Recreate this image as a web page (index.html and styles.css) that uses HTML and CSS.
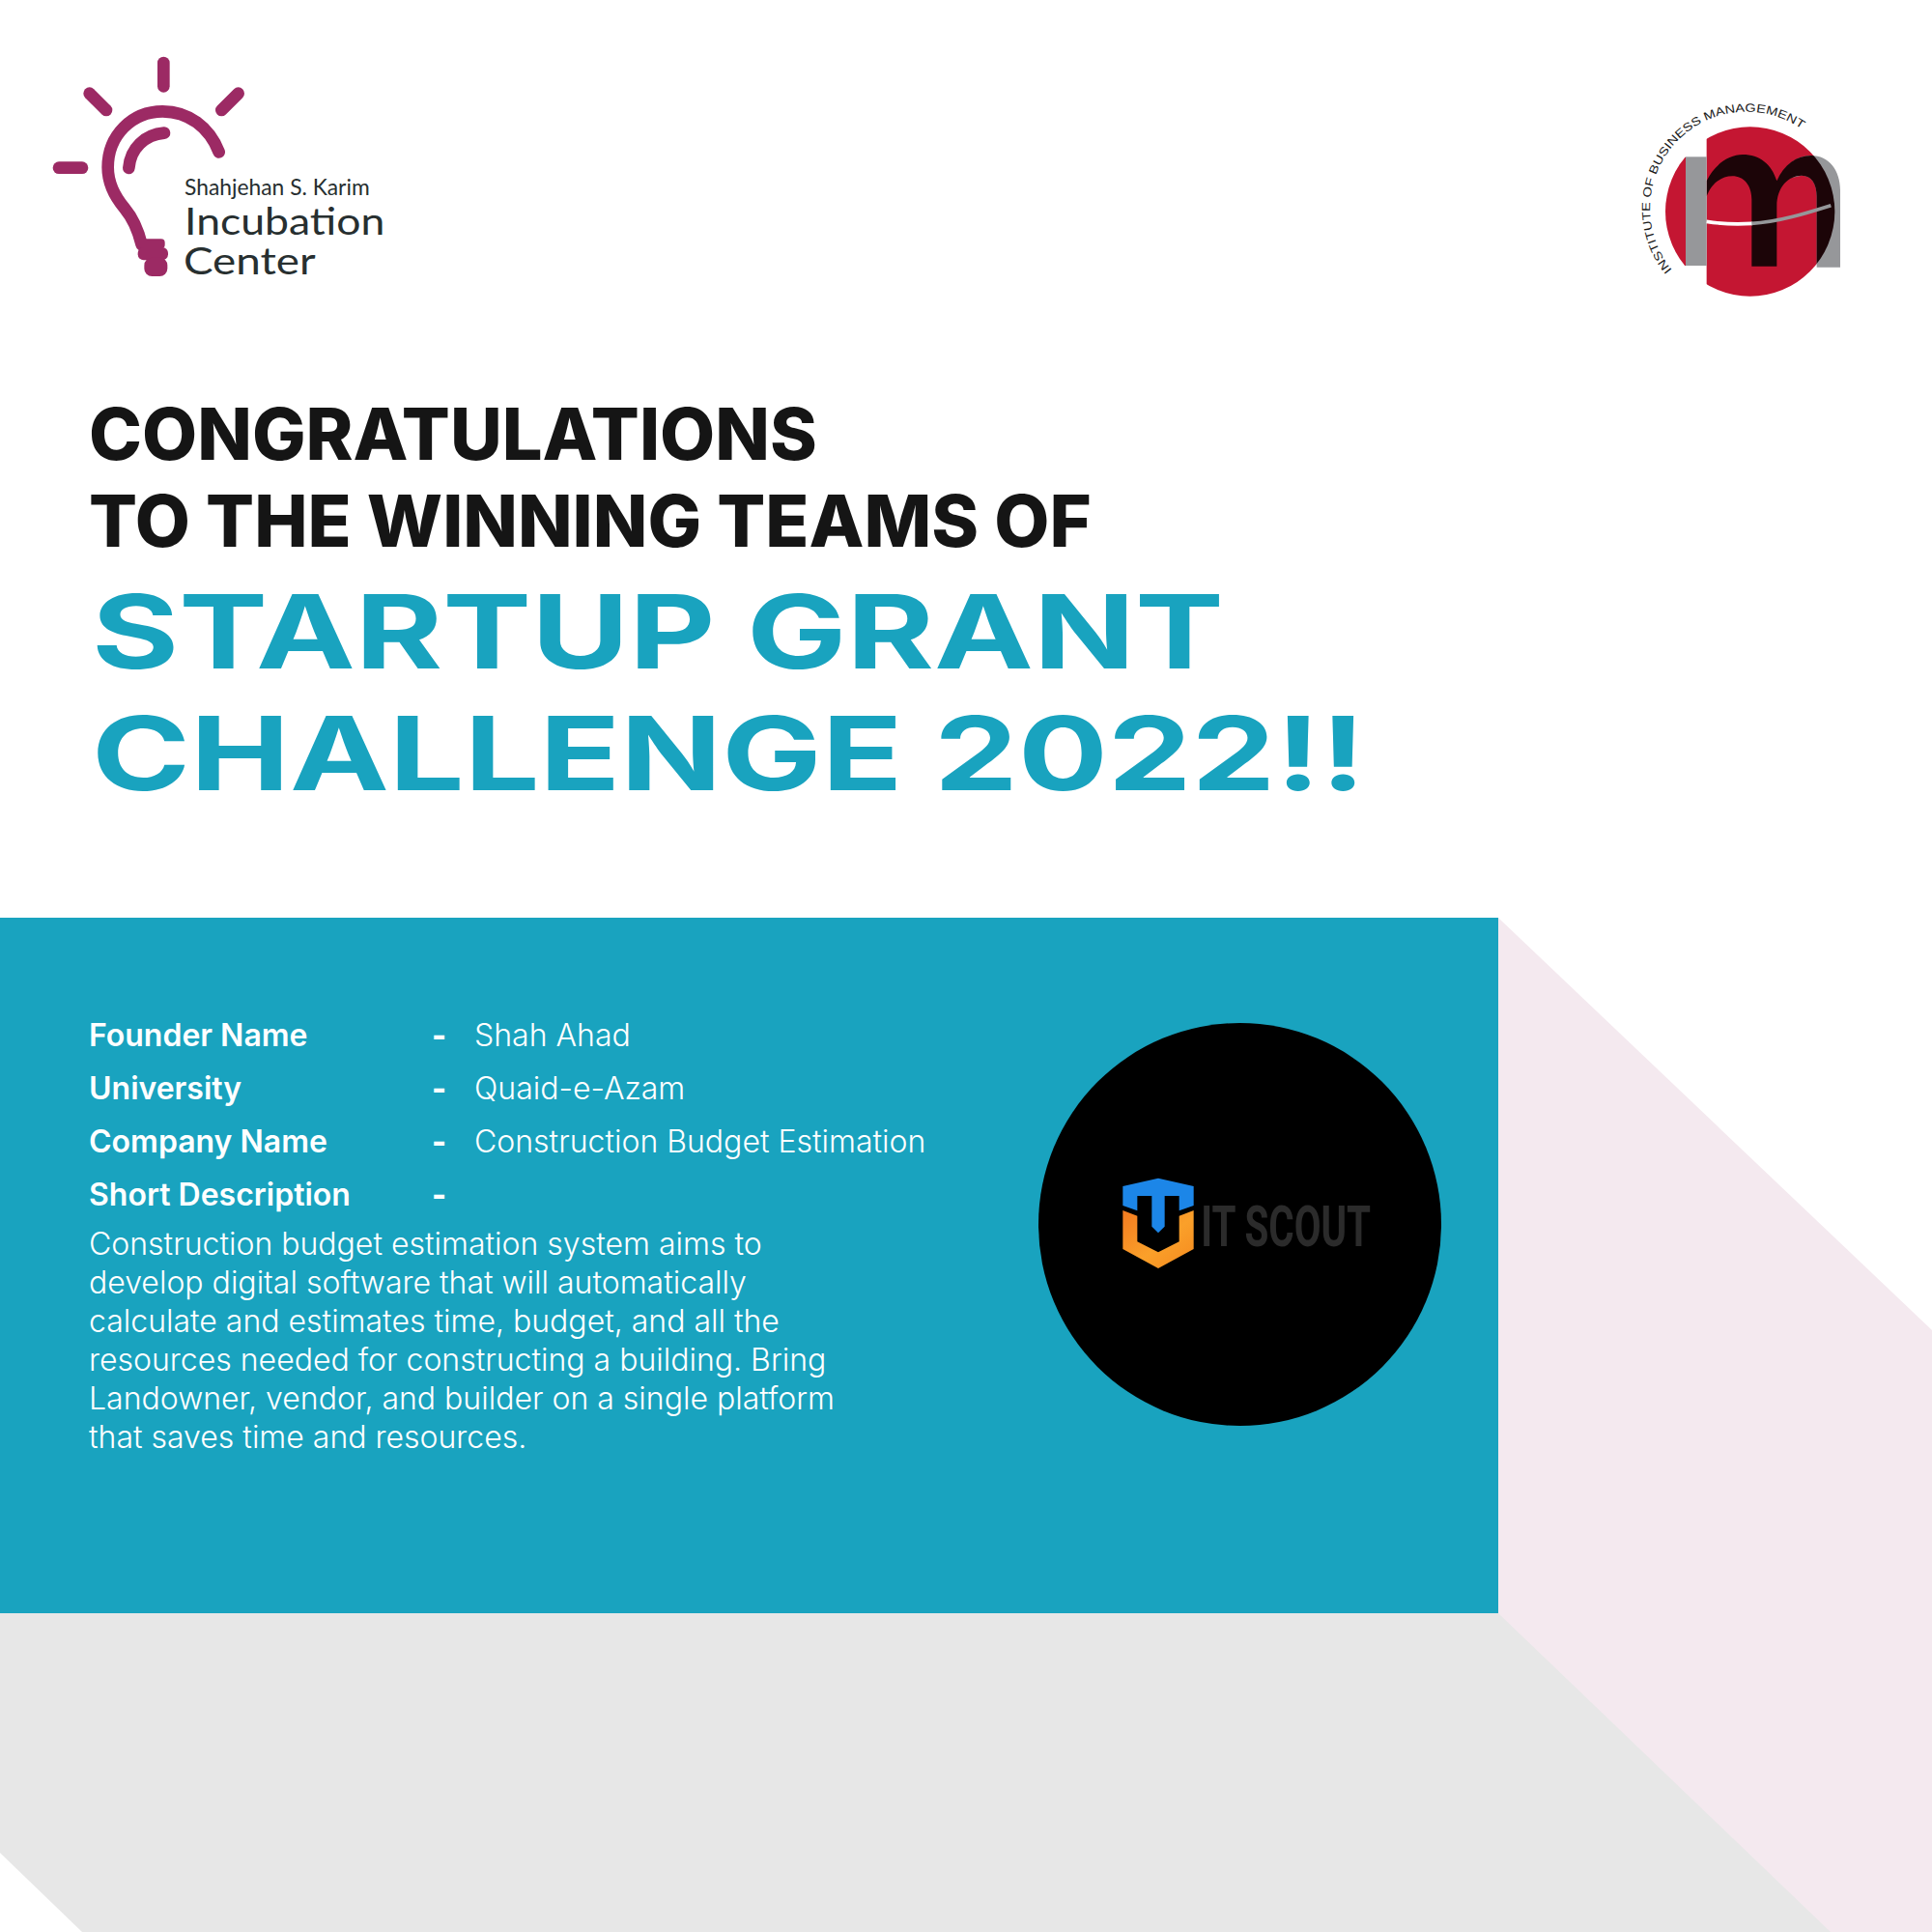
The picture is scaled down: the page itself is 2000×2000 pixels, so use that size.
FILE: index.html
```html
<!DOCTYPE html>
<html lang="en">
<head>
<meta charset="utf-8">
<title>Startup Grant Challenge 2022</title>
<link rel="stylesheet" href="styles.css">
</head>
<body>
<main class="page">
  <svg class="backdrop" viewBox="0 0 2000 2000" aria-hidden="true">
    <polygon class="bg-pink" points="1551,950 2000,1377 2000,2000 1551,2000"/>
    <polygon class="bg-grey" points="0,1670 1551,1670 1895,2000 85,2000 0,1918"/>
  </svg>

  <section class="top">
    <header class="logos">
      <svg class="logo-incubation" viewBox="0 0 1200 810" role="img" aria-label="Shahjehan S. Karim Incubation Center">
        <g class="lamp-stroke">
          <path d="M418 75V148"/>
          <path d="M188 170L240 222"/>
          <path d="M650 170L598 222"/>
          <path d="M93 401H165"/>
          <path d="M590 352C560 275 495 226 415 226C320 226 245 300 245 400C245 450 270 495 297 527C322 557 338 590 350 640"/>
          <path d="M420 293C360 298 315 340 310 402"/>
        </g>
        <g class="lamp-fill">
          <rect x="340" y="622" width="82" height="30" rx="12"/>
          <rect x="338" y="648" width="94" height="40" rx="18"/>
          <rect x="358" y="680" width="72" height="58" rx="24"/>
        </g>
        <text class="lt-small" x="483" y="487" textLength="575" lengthAdjust="spacingAndGlyphs">Shahjehan S. Karim</text>
        <text class="lt-big" x="483" y="610" textLength="622" lengthAdjust="spacingAndGlyphs">Incubation</text>
        <text class="lt-big" x="480" y="733" textLength="410" lengthAdjust="spacingAndGlyphs">Center</text>
      </svg>

      <svg class="logo-ibm" viewBox="0 0 750 660" role="img" aria-label="Institute of Business Management">
        <defs>
          <clipPath id="disc"><circle cx="395" cy="357" r="263"/></clipPath>
          <clipPath id="disc-right"><rect x="260" y="0" width="490" height="660"/></clipPath>
          <path id="ring" d="M153 538A300 300 0 1 1 640 190"/>
        </defs>
        <g clip-path="url(#disc)">
          <rect class="ibm-red" x="130" y="187" width="65" height="338"/>
          <rect class="ibm-red" x="260" y="90" width="410" height="540"/>
        </g>
        <rect class="ibm-grey" x="195" y="187" width="65" height="338"/>
        <path class="ibm-grey" d="M480 262C502 212 540 183 585 183C640 183 675 230 675 290V530H602V310C602 270 585 245 555 245Z"/>
        <g clip-path="url(#disc)">
          <g clip-path="url(#disc-right)">
            <path class="ibm-black" d="M260 262C285 210 330 180 372 180C425 180 462 210 478 262C500 210 540 183 585 183C640 183 675 230 675 290V530H602V310C602 270 585 245 555 245C515 245 478 280 478 340V527H400V320C400 275 375 247 340 247C305 247 275 270 260 310Z"/>
          </g>
        </g>
        <path class="ibm-band-white" d="M260 388C310 396 355 397 402 394"/>
        <path class="ibm-band-grey" d="M400 394C480 390 570 362 646 338"/>
        <text class="ibm-ring"><textPath href="#ring" textLength="860" lengthAdjust="spacingAndGlyphs">INSTITUTE OF BUSINESS MANAGEMENT</textPath></text>
      </svg>
    </header>

    <h1 class="congrats">CONGRATULATIONS<br>TO THE WINNING TEAMS OF</h1>
    <h2 class="challenge"><span class="ch-line ch-line-a">STARTUP GRANT</span><span class="ch-line ch-line-b">CHALLENGE 2022!!</span></h2>
  </section>

  <section class="panel">
    <div class="details">
      <dl class="facts">
        <dt>Founder Name</dt><dd><span class="dash">-</span><span class="val">Shah Ahad</span></dd>
        <dt>University</dt><dd><span class="dash">-</span><span class="val">Quaid-e-Azam</span></dd>
        <dt>Company Name</dt><dd><span class="dash">-</span><span class="val">Construction Budget Estimation</span></dd>
        <dt>Short Description</dt><dd><span class="dash">-</span></dd>
      </dl>
      <p class="desc">Construction budget estimation system aims to<br>develop digital software that will automatically<br>calculate and estimates time, budget, and all the<br>resources needed for constructing a building. Bring<br>Landowner, vendor, and builder on a single platform<br>that saves time and resources.</p>
    </div>
    <div class="badge">
      <svg class="scout" viewBox="0 0 960 420" role="img" aria-label="IT Scout">
        <defs>
          <linearGradient id="org" x1="0" y1="0" x2="1" y2="1">
            <stop offset="0" stop-color="#f47b20"/>
            <stop offset="0.55" stop-color="#faa02a"/>
            <stop offset="1" stop-color="#f58a1f"/>
          </linearGradient>
        </defs>
        <path class="sc-blue" d="M115 90L225 65L335 90V150L290 166V120H245V215L225 235L205 215V120H160V166L115 150Z"/>
        <path fill="url(#org)" d="M115 165L160 182V262L225 295L290 262V182L335 165V285L225 345L115 285Z"/>
        <text class="sc-text" x="358" y="275" textLength="527" lengthAdjust="spacingAndGlyphs">IT SCOUT</text>
      </svg>
    </div>
  </section>
</main>
</body>
</html>
```
FILE: styles.css
```css
* { box-sizing: border-box; }
html, body { margin: 0; padding: 0; background: #fff; }
body { font-family: Inter, "Liberation Sans", sans-serif; }

.page { position: relative; width: 2000px; height: 2000px; overflow: hidden; }
.backdrop { position: absolute; inset: 0; width: 2000px; height: 2000px; }
.bg-pink { fill: #f4e9ef; }
.bg-grey { fill: #e7e7e7; }

.top { position: relative; height: 950px; }
.logos { display: flex; justify-content: space-between; align-items: flex-start; height: 404px; padding: 40px 70px 0 30px; }
.logo-incubation { width: 400px; height: 270px; }
.logo-ibm { width: 250px; height: 220px; margin-top: 60px; }

.lamp-stroke path { fill: none; stroke: #9c2a64; stroke-width: 38; stroke-linecap: round; }
.lamp-fill rect { fill: #9c2a64; }
.lt-small { font-family: Lato, sans-serif; font-size: 72px; font-weight: 400; fill: #272f30; }
.lt-big { font-family: Lato, sans-serif; font-size: 118px; font-weight: 400; fill: #272f30; }

.ibm-red { fill: #c41632; }
.ibm-grey { fill: #96979a; }
.ibm-black { fill: #1c0508; }
.ibm-band-white { fill: none; stroke: #fff; stroke-width: 11; }
.ibm-band-grey { fill: none; stroke: #96979a; stroke-width: 11; }
.ibm-ring { font-family: "Liberation Sans", sans-serif; font-size: 36px; fill: #1a1a1a; }

.congrats { margin: 0 0 0 92px; font-size: 74px; line-height: 90px; font-weight: 800; color: #151515; letter-spacing: 0; }
.challenge { margin: 7px 0 0 95px; font-size: 106px; line-height: 126px; font-weight: 700; color: #19a3bf; }
.ch-line { display: block; width: max-content; transform-origin: left center; }
.ch-line-a { transform: scaleX(1.3); }
.ch-line-b { transform: scaleX(1.3); }

.panel { position: relative; display: grid; grid-template-columns: 983px 417px; width: 1551px; height: 720px; padding: 94px 0 0 92px; background: #19a3bf; color: #fff; }
.facts { display: grid; grid-template-columns: 355px auto; margin: 0; font-size: 32px; line-height: 55px; }
.facts dt { font-weight: 600; }
.facts dd { display: flex; margin: 0; }
.dash { width: 44px; font-weight: 800; }
.desc { margin: 4px 0 0; font-size: 32px; line-height: 40px; font-weight: 300; }
.val { font-weight: 300; }
.badge { display: flex; justify-content: center; align-items: center; width: 417px; height: 417px; margin-top: 15px; border-radius: 50%; background: #000; }
.scout { width: 320px; height: 140px; }
.sc-blue { fill: #1c86e8; }
.sc-text { font-family: Roboto, sans-serif; font-size: 176px; font-weight: 700; fill: #2b2b2b; }
```
